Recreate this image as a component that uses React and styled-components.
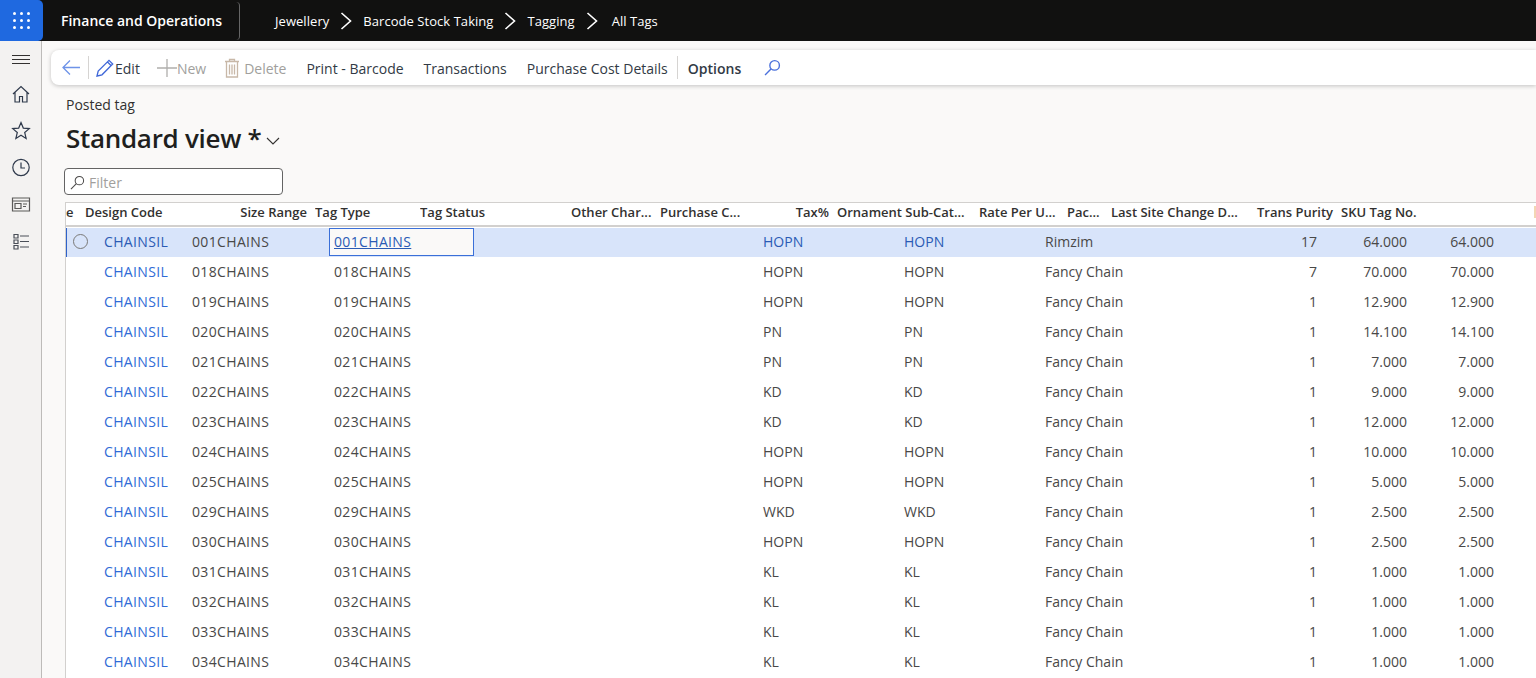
import styled, { createGlobalStyle } from "styled-components";

const FONT = `"Open Sans", "Noto Sans", "Liberation Sans", sans-serif`;

const GlobalStyle = createGlobalStyle`
  html, body {
    margin: 0;
    padding: 0;
    height: 100%;
    overflow: hidden;
    background: #faf9f8;
    font-family: ${FONT};
  }
  * {
    box-sizing: border-box;
  }
`;

const Shell = styled.div`
  display: flex;
  flex-direction: column;
  height: 100vh;
  overflow: hidden;
`;

const TopBar = styled.header`
  display: flex;
  align-items: center;
  flex: 0 0 41px;
  height: 41px;
  background: #111110;
  color: #fff;
`;

const Waffle = styled.div`
  display: grid;
  grid-template-columns: repeat(3, 3px);
  grid-auto-rows: 3px;
  gap: 4px;
  align-content: center;
  justify-content: center;
  width: 43px;
  height: 41px;
  background: #1f69e0;
  border-radius: 0 5px 5px 0;

  span {
    background: #fff;
    border-radius: 50%;
  }
`;

const AppTitle = styled.div`
  width: 197px;
  height: 38px;
  padding-left: 18px;
  line-height: 38px;
  font-size: 14px;
  font-weight: 600;
  border-right: 1px solid #666;
  border-radius: 0 4px 4px 0;
`;

const Crumbs = styled.nav`
  display: flex;
  align-items: center;
  margin-left: 35px;
  font-size: 13px;
  letter-spacing: 0.05px;
`;

const Crumb = styled.span`
  display: flex;
  align-items: center;
  white-space: nowrap;

  &:last-child {
    margin-left: 3px;
  }
`;

const CrumbArrow = styled.svg`
  width: 12px;
  height: 18px;
  margin: 0 11px;
  fill: none;
  stroke: #fff;
  stroke-width: 1.6;
`;

const Body = styled.div`
  display: flex;
  flex: 1;
  min-height: 0;
`;

const SideNav = styled.aside`
  display: flex;
  flex-direction: column;
  align-items: center;
  flex: 0 0 42px;
  padding-top: 10px;
  gap: 14px;
  background: #f3f2f1;
  border-right: 1px solid #bdbbb9;
`;

const NavIcon = styled.svg`
  display: block;
  width: 22px;
  height: ${(p) => p.$height || 23}px;
  fill: none;
  stroke: ${(p) => p.$color || "#2f3a4c"};
  stroke-width: ${(p) => p.$stroke || 1.2};
`;

const Main = styled.main`
  display: flex;
  flex-direction: column;
  flex: 1;
  min-width: 0;
  padding: 9px 0 0 9px;
`;

const ActionBar = styled.div`
  display: flex;
  align-items: center;
  flex: 0 0 35px;
  background: #fff;
  border-radius: 8px 0 0 8px;
  box-shadow: 0 1px 4px rgba(0, 0, 0, 0.22);
  font-size: 14px;
  color: #323130;
`;

const BackButton = styled.svg`
  width: 20px;
  height: 20px;
  margin-left: 10px;
  fill: none;
  stroke: #6e93e8;
  stroke-width: 1.3;
`;

const Divider = styled.span`
  width: 1px;
  height: 23px;
  margin: ${(p) => p.$margin};
  background: #d6d4d2;
`;

const Action = styled.span`
  display: flex;
  align-items: center;
  gap: ${(p) => p.$gap || 0}px;
  margin-left: ${(p) => p.$left || 0}px;
  padding-top: 1px;
  white-space: nowrap;
  color: ${(p) => (p.$disabled ? "#a19f9d" : "#323a45")};
  font-weight: ${(p) => (p.$bold ? 600 : 400)};
`;

const ActionIcon = styled.svg`
  width: ${(p) => p.$size || 20}px;
  height: ${(p) => (p.$size === 17 ? 17 : 20)}px;
  margin-left: ${(p) => p.$left || 0}px;
  fill: none;
  stroke: ${(p) => p.$color};
  stroke-width: 1.3;
`;

const Caption = styled.div`
  margin: 11px 0 0 15px;
  font-size: 14px;
  line-height: 18px;
  color: #323130;
`;

const ViewTitle = styled.h1`
  display: flex;
  align-items: center;
  margin: 6px 0 0 15px;
  font-size: 26px;
  line-height: 36px;
  font-weight: 600;
  letter-spacing: -0.3px;
  color: #201f1e;
`;

const Chevron = styled.svg`
  width: 14px;
  height: 14px;
  margin: 6px 0 0 5px;
  fill: none;
  stroke: #323130;
  stroke-width: 1.1;
`;

const FilterBox = styled.div`
  display: flex;
  align-items: center;
  gap: 4px;
  width: 219px;
  height: 27px;
  margin: 12px 0 0 13px;
  padding: 1px 0 0 5px;
  background: #fff;
  border: 1px solid #646464;
  border-radius: 4px;
  font-size: 14px;
  color: #a19f9d;
`;

const FilterIcon = styled.svg`
  width: 15px;
  height: 15px;
  fill: none;
  stroke: #4b4a49;
  stroke-width: 1.1;
`;

const GridPanel = styled.section`
  flex: 1;
  min-height: 0;
  margin: 7px 0 0 14px;
  overflow: hidden;
  background: #fff;
  border-top: 1px solid #d2d0ce;
  border-left: 1px solid #d2d0ce;
`;

const HeaderRow = styled.div`
  display: grid;
  grid-template-columns: 19px 115px 115px 105px 151px 89px 85px 92px 142px 88px 44px 139px 91px 193px 2px;
  height: 24px;
  padding-bottom: 4px;
  align-items: center;
  background: #fff;
  border-bottom: 2px solid #d2d0ce;
  font-size: 13px;
  font-weight: 600;
  color: #323130;
`;

const HeadCell = styled.div`
  overflow: hidden;
  white-space: nowrap;
  padding-right: ${(p) => (p.$right ? 8 : 0)}px;
  text-align: ${(p) => (p.$right ? "right" : "left")};
`;

const RowMark = styled.div`
  width: 2px;
  height: 12px;
  background: #f3d6b4;
`;

const Row = styled.div`
  display: grid;
  grid-template-columns: 30px 88px 145px 145px 281px 141px 141px 163px 125px 90px 87px 1fr;
  align-items: center;
  height: 30px;
  padding-bottom: ${(p) => (p.$selected ? 2 : 1)}px;
  font-size: 14px;
  color: #494847;
  background: ${(p) => (p.$selected ? "#d8e4fa" : "#fff")};
  box-shadow: ${(p) => (p.$selected ? "inset 1px 0 0 #2f62c9" : "none")};
  border-top: ${(p) => (p.$selected ? "1px solid #fff" : "none")};
`;

const Cell = styled.div`
  overflow: hidden;
  white-space: nowrap;
  padding: 0 8px;
  text-align: ${(p) => (p.$right ? "right" : "left")};
  letter-spacing: ${(p) => (p.$caps ? "0.35px" : "normal")};
  color: ${(p) => p.$color || "inherit"};
`;

const RadioCell = styled.div`
  display: flex;
  align-items: center;
  padding-left: 7px;
`;

const Radio = styled.span`
  width: 15px;
  height: 15px;
  border: 1px solid #7a7977;
  border-radius: 50%;
`;

const FocusCell = styled.div`
  height: 28px;
  margin-bottom: -1px;
  padding-left: 4px;
  line-height: 25px;
  letter-spacing: 0.35px;
  background: #faf9f8;
  border: 1px solid #3a6fd8;
  color: #2b5bb5;
  text-decoration: underline;
`;

const PlainCell = styled.div`
  padding-left: 5px;
  letter-spacing: 0.35px;
`;

const headers = [
  ["e"],
  ["Design Code"],
  ["Size Range", true],
  ["Tag Type"],
  ["Tag Status"],
  ["Other Char..."],
  ["Purchase C..."],
  ["Tax%", true],
  ["Ornament Sub-Cat..."],
  ["Rate Per U..."],
  ["Pac..."],
  ["Last Site Change D..."],
  ["Trans Purity", true],
  ["SKU Tag No."],
];

const rows = [
  ["001CHAINS", "HOPN", "Rimzim", "17", "64.000"],
  ["018CHAINS", "HOPN", "Fancy Chain", "7", "70.000"],
  ["019CHAINS", "HOPN", "Fancy Chain", "1", "12.900"],
  ["020CHAINS", "PN", "Fancy Chain", "1", "14.100"],
  ["021CHAINS", "PN", "Fancy Chain", "1", "7.000"],
  ["022CHAINS", "KD", "Fancy Chain", "1", "9.000"],
  ["023CHAINS", "KD", "Fancy Chain", "1", "12.000"],
  ["024CHAINS", "HOPN", "Fancy Chain", "1", "10.000"],
  ["025CHAINS", "HOPN", "Fancy Chain", "1", "5.000"],
  ["029CHAINS", "WKD", "Fancy Chain", "1", "2.500"],
  ["030CHAINS", "HOPN", "Fancy Chain", "1", "2.500"],
  ["031CHAINS", "KL", "Fancy Chain", "1", "1.000"],
  ["032CHAINS", "KL", "Fancy Chain", "1", "1.000"],
  ["033CHAINS", "KL", "Fancy Chain", "1", "1.000"],
  ["034CHAINS", "KL", "Fancy Chain", "1", "1.000"],
];

const crumbs = ["Jewellery", "Barcode Stock Taking", "Tagging", "All Tags"];

function SideIcons() {
  return (
    <>
      <NavIcon viewBox="0 0 22 17" $height={17} $color="#323130" $stroke={1}>
        <path d="M2 4.5h18M2 8.5h18M2 12.5h18" />
      </NavIcon>
      <NavIcon viewBox="0 0 22 23">
        <path d="M3 12 11 4.5l8 7.5M5 10.5V20h4.5v-5.5h3V20H17v-9.5" />
      </NavIcon>
      <NavIcon viewBox="0 0 22 23">
        <path d="m11 3.5 2.3 5.6 6 .5-4.6 3.9 1.4 5.9-5.1-3.2-5.1 3.2 1.4-5.9-4.6-3.9 6-.5z" />
      </NavIcon>
      <NavIcon viewBox="0 0 22 23">
        <circle cx="11" cy="11.5" r="8.2" />
        <path d="M11 6.5v5.5h4" />
      </NavIcon>
      <NavIcon viewBox="0 0 22 23" $color="#5b5a59">
        <path d="M2.5 5h17v13h-17zM2.5 8h17M5 10.5h6v5H5zM13 11h4M13 13.5h3" />
      </NavIcon>
      <NavIcon viewBox="0 0 22 23" $color="#4a4f58">
        <path d="M4 4.5h4v3.5H4zM4 10h4v3.5H4zM4 15.5h4V19H4zM10 6h9M10 11.5h9M10 17h9" />
      </NavIcon>
    </>
  );
}

export default function App() {
  return (
    <Shell>
      <GlobalStyle />
      <TopBar>
        <Waffle>
          {Array.from({ length: 9 }, (_, i) => (
            <span key={i} />
          ))}
        </Waffle>
        <AppTitle>Finance and Operations</AppTitle>
        <Crumbs>
          {crumbs.map((c, i) => (
            <Crumb key={c}>
              {c}
              {i < crumbs.length - 1 && (
                <CrumbArrow viewBox="0 0 12 18">
                  <path d="M1.5 1l9 8-9 8" />
                </CrumbArrow>
              )}
            </Crumb>
          ))}
        </Crumbs>
      </TopBar>
      <Body>
        <SideNav>
          <SideIcons />
        </SideNav>
        <Main>
          <ActionBar>
            <BackButton viewBox="0 0 20 20">
              <path d="M19 9.5H2M9 2.5l-7 7 7 7" />
            </BackButton>
            <Divider $margin="0 6px 0 7px" />
            <Action>
              <ActionIcon viewBox="0 0 20 20" $color="#3f67d8" $size={20}>
                <path d="M2 18l1.2-5L14 2.3l3.7 3.7L7 16.8zM12.5 4l3.5 3.5" />
              </ActionIcon>
              Edit
            </Action>
            <Action $left={17} $disabled>
              <ActionIcon viewBox="0 0 20 20" $color="#b0aeac">
                <path d="M10 1v18M0 10h20" />
              </ActionIcon>
              New
            </Action>
            <Action $left={18} $disabled $gap={4}>
              <ActionIcon viewBox="0 0 16 20" $color="#c8b8a8" $size={16}>
                <path d="M1 3.5h14M5.5 3.5V1.5h5v2M2.5 3.5V19h11V3.5M5.5 6.5v10M8 6.5v10M10.5 6.5v10" />
              </ActionIcon>
              Delete
            </Action>
            <Action $left={20}>Print - Barcode</Action>
            <Action $left={20}>Transactions</Action>
            <Action $left={20}>Purchase Cost Details</Action>
            <Divider $margin="0 10px 0 9px" />
            <Action $bold>Options</Action>
            <ActionIcon viewBox="0 0 16 16" $color="#4a70dc" $size={17} $left={23}>
              <circle cx="10" cy="6" r="4.5" />
              <path d="M6.8 9.2 1 15" />
            </ActionIcon>
          </ActionBar>
          <Caption>Posted tag</Caption>
          <ViewTitle>
            Standard view *
            <Chevron viewBox="0 0 14 14">
              <path d="M1 4l6 6 6-6" />
            </Chevron>
          </ViewTitle>
          <FilterBox>
            <FilterIcon viewBox="0 0 16 16">
              <circle cx="10" cy="6" r="4.5" />
              <path d="M6.8 9.2 1 15" />
            </FilterIcon>
            Filter
          </FilterBox>
          <GridPanel>
            <HeaderRow>
              {headers.map(([label, right]) => (
                <HeadCell key={label} $right={right}>
                  {label}
                </HeadCell>
              ))}
              <RowMark />
            </HeaderRow>
            {rows.map(([code, type, brand, qty, weight], i) => {
              const selected = i === 0;
              const tint = selected ? "#2b5bb5" : undefined;
              return (
                <Row key={code} $selected={selected}>
                  <RadioCell>{selected && <Radio />}</RadioCell>
                  <Cell $caps $color={selected ? "#2b5bb5" : "#2f6bd6"}>CHAINSIL</Cell>
                  <Cell $caps>{code}</Cell>
                  {selected ? <FocusCell>{code}</FocusCell> : <PlainCell>{code}</PlainCell>}
                  <div />
                  <Cell $color={tint}>{type}</Cell>
                  <Cell $color={tint}>{type}</Cell>
                  <Cell>{brand}</Cell>
                  <Cell $right>{qty}</Cell>
                  <Cell $right>{weight}</Cell>
                  <Cell $right>{weight}</Cell>
                  <div />
                </Row>
              );
            })}
          </GridPanel>
        </Main>
      </Body>
    </Shell>
  );
}
